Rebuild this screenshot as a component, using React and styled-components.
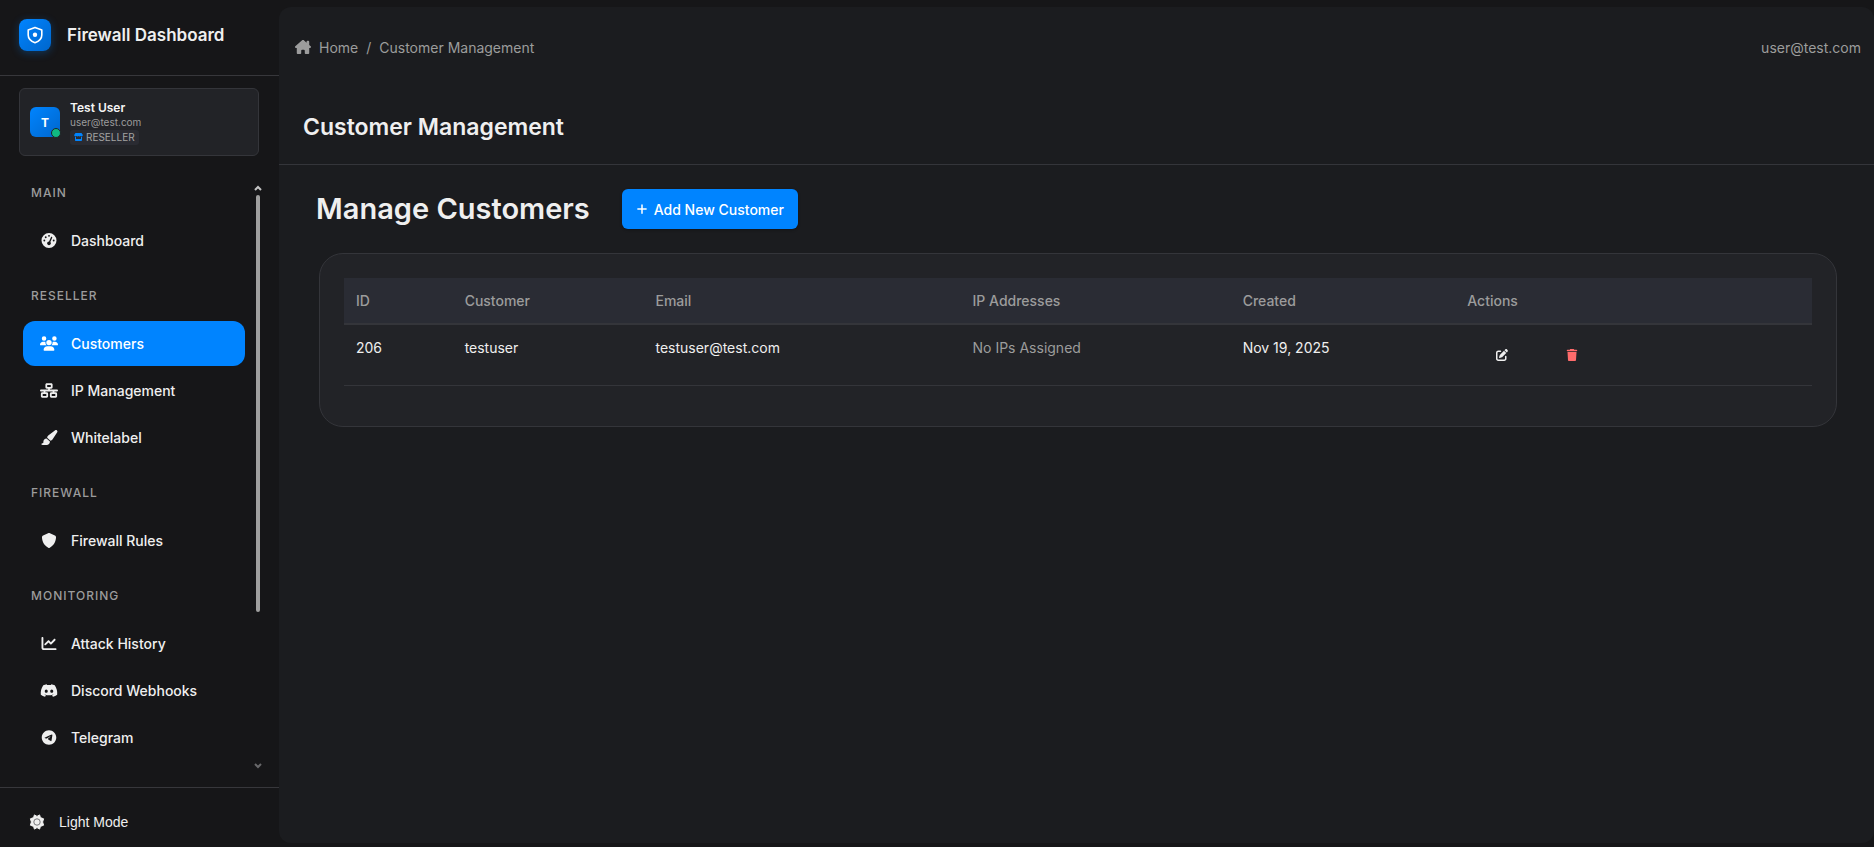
import React from "react";
import styled, { createGlobalStyle } from "styled-components";
import {
  FaChartLine,
  FaDiscord,
  FaGaugeHigh,
  FaHouseChimney,
  FaNetworkWired,
  FaPaintbrush,
  FaPenToSquare,
  FaPlus,
  FaShield,
  FaStore,
  FaTelegram,
  FaTrash,
  FaUsers,
} from "react-icons/fa6";

const sections = [
  {
    title: "Main",
    items: [{ label: "Dashboard", icon: <FaGaugeHigh /> }],
  },
  {
    title: "Reseller",
    items: [
      { label: "Customers", icon: <FaUsers />, active: true },
      { label: "IP Management", icon: <FaNetworkWired /> },
      { label: "Whitelabel", icon: <FaPaintbrush /> },
    ],
  },
  {
    title: "Firewall",
    items: [{ label: "Firewall Rules", icon: <FaShield /> }],
  },
  {
    title: "Monitoring",
    items: [
      { label: "Attack History", icon: <FaChartLine /> },
      { label: "Discord Webhooks", icon: <FaDiscord /> },
      { label: "Telegram", icon: <FaTelegram /> },
    ],
  },
];

const columns = [
  { name: "ID", width: "7.4%" },
  { name: "Customer", width: "13%" },
  { name: "Email", width: "21.6%" },
  { name: "IP Addresses", width: "18.4%" },
  { name: "Created", width: "15.3%" },
  { name: "Actions", width: "24.3%" },
];

const customers = [
  { id: 206, name: "testuser", email: "testuser@test.com", created: "Nov 19, 2025" },
];

function ShieldLogo() {
  return (
    <svg width="18" height="18" viewBox="0 0 18 18" fill="none" aria-hidden="true">
      <path
        d="M9 1.4 15.8 3.9V9c0 3.6-2.5 6.2-6.8 7.7C4.7 15.2 2.2 12.6 2.2 9V3.9Z"
        stroke="#fff"
        strokeWidth="1.6"
        strokeLinejoin="round"
      />
      <circle cx="9" cy="8.8" r="2.2" fill="#fff" />
    </svg>
  );
}

function SunIcon() {
  return (
    <svg width="16" height="16" viewBox="0 0 16 16" aria-hidden="true">
      <path
        d="M8 2.4 10.6 .9 11.4 3.6 14.6 4.8 13.6 8 14.6 11.2 11.4 12.4 10.6 15.1 8 13.6 5.4 15.1 4.6 12.4 1.4 11.2 2.4 8 1.4 4.8 4.6 3.6 5.4 .9Z"
        fill="#efefef"
        stroke="#efefef"
        strokeLinejoin="round"
        strokeWidth="1"
      />
      <circle cx="8" cy="8" r="3.2" fill="#efefef" stroke="#77777a" strokeWidth="1" />
    </svg>
  );
}

function Sidebar() {
  return (
    <SidebarWrapper>
      <Brand>
        <Logo>
          <ShieldLogo />
        </Logo>
        <span>Firewall Dashboard</span>
      </Brand>

      <UserCard>
        <Avatar>
          T<Status />
        </Avatar>
        <UserInfo>
          <strong>Test User</strong>
          <span>user@test.com</span>
          <Role>
            <FaStore /> RESELLER
          </Role>
        </UserInfo>
      </UserCard>

      <NavArea>
        <Nav>
          {sections.map((section) => (
            <section key={section.title}>
              <SectionTitle>{section.title}</SectionTitle>
              {section.items.map((item) => (
                <NavItem href="#" key={item.label} $active={item.active}>
                  {item.icon}
                  {item.label}
                </NavItem>
              ))}
            </section>
          ))}
        </Nav>
        <Scrollbar aria-hidden="true">
          <svg width="8" height="6" viewBox="0 0 8 6" fill="none">
            <path d="M1 5 4 2 7 5" stroke="#c4c4c4" strokeWidth="2" />
          </svg>
          <Track>
            <Thumb />
          </Track>
          <svg width="8" height="6" viewBox="0 0 8 6" fill="none">
            <path d="M1 1 4 4 7 1" stroke="#68686a" strokeWidth="2" />
          </svg>
        </Scrollbar>
      </NavArea>

      <SidebarFooter>
        <ThemeButton type="button">
          <SunIcon />
          Light Mode
        </ThemeButton>
      </SidebarFooter>
    </SidebarWrapper>
  );
}

function CustomerTable() {
  return (
    <Table>
      <colgroup>
        {columns.map((column) => (
          <col key={column.name} style={{ width: column.width }} />
        ))}
      </colgroup>
      <thead>
        <tr>
          {columns.map((column) => (
            <th key={column.name}>{column.name}</th>
          ))}
        </tr>
      </thead>
      <tbody>
        {customers.map((customer) => (
          <tr key={customer.id}>
            <td>{customer.id}</td>
            <td>{customer.name}</td>
            <td>{customer.email}</td>
            <td>
              <Muted>No IPs Assigned</Muted>
            </td>
            <td>{customer.created}</td>
            <td>
              <Actions>
                <IconButton type="button" aria-label="Edit customer">
                  <FaPenToSquare />
                </IconButton>
                <IconButton type="button" aria-label="Delete customer" $danger>
                  <FaTrash />
                </IconButton>
              </Actions>
            </td>
          </tr>
        ))}
      </tbody>
    </Table>
  );
}

function App() {
  return (
    <Layout>
      <GlobalStyle />
      <Sidebar />
      <Main>
        <Topbar>
          <Breadcrumb aria-label="Breadcrumb">
            <a href="#">
              <FaHouseChimney />
              Home
            </a>
            <span>/</span>
            <span>Customer Management</span>
          </Breadcrumb>
          <span>user@test.com</span>
        </Topbar>
        <PageHeader>
          <h1>Customer Management</h1>
        </PageHeader>
        <Content>
          <Toolbar>
            <h2>Manage Customers</h2>
            <AddButton type="button">
              <FaPlus />
              Add New Customer
            </AddButton>
          </Toolbar>
          <Card>
            <CustomerTable />
          </Card>
        </Content>
      </Main>
    </Layout>
  );
}

const GlobalStyle = createGlobalStyle`
  * {
    box-sizing: border-box;
  }

  body {
    margin: 0;
    background: #161618;
    color: #efefef;
    font-family: "Inter", "Liberation Sans", sans-serif;
    font-size: 14px;
    line-height: 21px;
  }

  h1, h2 {
    margin: 0;
    font-weight: 600;
  }

  a {
    color: inherit;
    text-decoration: none;
  }
`;

const Layout = styled.div`
  display: flex;
  min-height: 100vh;
`;

const SidebarWrapper = styled.aside`
  width: 279px;
  flex-shrink: 0;
  height: 100vh;
  display: flex;
  flex-direction: column;
`;

const Brand = styled.div`
  display: flex;
  align-items: center;
  gap: 16px;
  height: 76px;
  padding: 0 19px 5px;
  border-bottom: 1px solid #37373b;
  font-size: 17px;
  font-weight: 600;
`;

const Logo = styled.div`
  display: flex;
  align-items: center;
  justify-content: center;
  width: 32px;
  height: 32px;
  border-radius: 8px;
  background: linear-gradient(135deg, #0084ff, #0066cc);
  box-shadow: 0 2px 8px rgba(0, 132, 255, 0.3);
`;

const UserCard = styled.div`
  display: flex;
  align-items: center;
  gap: 10px;
  height: 68px;
  margin: 12px 20px 0 19px;
  padding: 0 10px;
  border: 1px solid #34353a;
  border-radius: 6px;
  background: #222327;
`;

const Avatar = styled.div`
  position: relative;
  display: flex;
  align-items: center;
  justify-content: center;
  width: 30px;
  height: 30px;
  border-radius: 6px;
  background: linear-gradient(135deg, #0084ff, #0066cc);
  color: #fff;
  font-size: 12px;
  font-weight: 700;
`;

const Status = styled.span`
  position: absolute;
  right: -1px;
  bottom: -1px;
  width: 10px;
  height: 10px;
  border: 1px solid #222327;
  border-radius: 50%;
  background: #10b981;
`;

const UserInfo = styled.div`
  display: flex;
  flex-direction: column;
  align-items: flex-start;
  font-size: 10px;
  line-height: 15px;
  color: #9c9c9c;

  strong {
    color: #f5f5f5;
    font-size: 12px;
    font-weight: 600;
  }
`;

const Role = styled.span`
  display: flex;
  align-items: center;
  gap: 3px;
  height: 15px;
  padding: 0 4px;
  border-radius: 3px;
  background: #2a2b32;
  color: #a3a3a3;

  svg {
    width: 9px;
    height: 8px;
    color: #0084ff;
  }
`;

const NavArea = styled.div`
  display: flex;
  flex: 1;
  min-height: 0;
  margin-top: 27px;
  padding-right: 17px;
`;

const Nav = styled.nav`
  flex: 1;
  padding-left: 23px;
  overflow: hidden;

  section + section {
    margin-top: 23px;
  }
`;

const SectionTitle = styled.div`
  padding: 0 8px 15px;
  line-height: 20px;
  color: #9c9c9c;
  font-size: 12px;
  font-weight: 500;
  letter-spacing: 1px;
  text-transform: uppercase;
`;

const NavItem = styled.a`
  display: flex;
  align-items: center;
  gap: 13px;
  height: 45px;
  margin-bottom: 2px;
  padding: 0 17px;
  border-radius: 12px;
  background: ${({ $active }) => ($active ? "#0084ff" : "transparent")};
  color: ${({ $active }) => ($active ? "#fff" : "#efefef")};
  font-weight: 500;

  svg {
    width: 18px;
    height: 15px;
  }
`;

const Scrollbar = styled.div`
  display: flex;
  flex-direction: column;
  align-items: center;
  gap: 4px;
  width: 8px;
  margin: 2px 0 18px 9px;
`;

const Track = styled.div`
  flex: 1;
`;

const Thumb = styled.div`
  width: 4px;
  height: 74%;
  border-radius: 2px;
  background: #9f9f9f;
`;

const SidebarFooter = styled.div`
  display: flex;
  align-items: center;
  height: 60px;
  padding: 8px 29px 0;
  border-top: 1px solid #37373b;
`;

const ThemeButton = styled.button`
  display: flex;
  align-items: center;
  gap: 14px;
  padding: 0;
  border: 0;
  background: none;
  color: #efefef;
  font: 14px "Liberation Sans", sans-serif;
`;

const Main = styled.main`
  flex: 1;
  min-width: 0;
  margin: 7px 0 4px;
  border-radius: 12px;
  background: #1b1c1f;
`;

const Topbar = styled.header`
  display: flex;
  align-items: center;
  justify-content: space-between;
  height: 82px;
  padding: 0 13px 2px 16px;
  color: #9c9c9c;
`;

const Breadcrumb = styled.nav`
  display: flex;
  gap: 8px;

  a {
    display: flex;
    align-items: center;
    gap: 8px;
  }

  svg {
    width: 16px;
    height: 16px;
  }
`;

const PageHeader = styled.div`
  display: flex;
  align-items: center;
  height: 76px;
  padding: 0 24px;
  border-bottom: 1px solid #34353a;

  h1 {
    font-size: 23px;
    line-height: 32px;
  }
`;

const Content = styled.div`
  padding: 24px 37px;
`;

const Toolbar = styled.div`
  display: flex;
  align-items: center;
  gap: 32px;
  margin-bottom: 24px;

  h2 {
    font-size: 29px;
    line-height: 40px;
  }
`;

const AddButton = styled.button`
  display: flex;
  align-items: center;
  gap: 6px;
  height: 40px;
  padding: 0 14px;
  border: 0;
  border-radius: 6px;
  background: #0084ff;
  box-shadow: 0 1px 3px rgba(0, 0, 0, 0.3);
  color: #fff;
  font: inherit;
  font-weight: 500;

  svg {
    width: 12px;
    height: 12px;
  }
`;

const Card = styled.section`
  margin-left: 3px;
  padding: 24px 24px 40px;
  border: 1px solid #34353a;
  border-radius: 24px;
  background: #222327;
`;

const Table = styled.table`
  width: 100%;
  table-layout: fixed;
  border-collapse: separate;
  border-spacing: 0;
  text-align: left;

  th {
    padding: 12px;
    border-bottom: 2px solid #34353a;
    background: #2a2c34;
    color: #9c9c9c;
    font-weight: 500;
  }

  td {
    padding: 12px;
    border-bottom: 1px solid #34353a;
    vertical-align: top;
  }
`;

const Muted = styled.span`
  color: #9c9c9c;
`;

const Actions = styled.div`
  display: flex;
`;

const IconButton = styled.button`
  display: flex;
  align-items: center;
  justify-content: center;
  width: 70px;
  height: 36px;
  padding: 0;
  border: 0;
  background: none;
  color: ${({ $danger }) => ($danger ? "#ff6b6b" : "#efefef")};

  svg {
    width: 12px;
    height: 12px;
  }
`;

export default App;
